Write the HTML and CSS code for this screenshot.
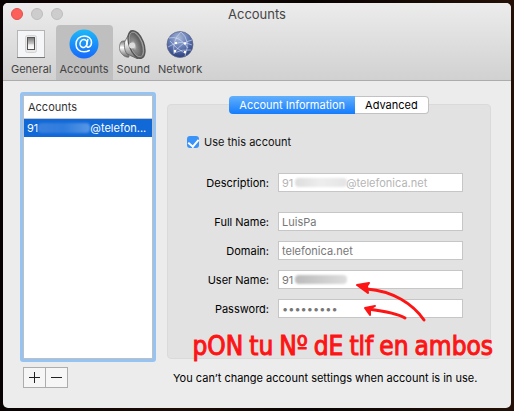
FILE: index.html
```html
<!DOCTYPE html>
<html lang="en">
<head>
<meta charset="utf-8">
<title>Accounts</title>
<link rel="stylesheet" href="styles.css">
</head>
<body>
<main class="window">
  <header class="toolbar">
    <div class="titlebar">
      <div class="lights">
        <button class="light close" aria-label="Close"></button>
        <button class="light" aria-label="Minimize"></button>
        <button class="light" aria-label="Zoom"></button>
      </div>
      <h1 class="title">Accounts</h1>
    </div>
    <nav class="tools">
      <button class="tool">
        <svg class="tool-icon" viewBox="0 0 30 30" aria-hidden="true">
          <defs><linearGradient id="sw" x2="0" y2="1"><stop offset="0" stop-color="#777"/><stop offset=".55" stop-color="#ccc"/><stop offset=".6" stop-color="#eee"/><stop offset="1" stop-color="#fff"/></linearGradient></defs>
          <rect x="1.5" y="1.5" width="27" height="27" fill="#f5f6f7" stroke="#b5b5b5"/>
          <path d="M1 28.5h28" stroke="#777"/>
          <rect x="9.500" y="6.500" width="11" height="17" rx="2" fill="#e9e9ea" stroke="#d4d4d6"/>
          <rect x="11.500" y="8.500" width="7" height="12" fill="url(#sw)" stroke="#555"/>
        </svg>
        <span>General</span>
      </button>
      <button class="tool selected">
        <svg class="tool-icon" viewBox="0 0 30 30" aria-hidden="true">
          <defs><linearGradient id="at" x2="0" y2="1"><stop offset="0" stop-color="#1db8f8"/><stop offset="1" stop-color="#1769fb"/></linearGradient></defs>
          <circle cx="15" cy="15" r="14.500" fill="url(#at)"/>
          <ellipse cx="14.500" cy="14.500" rx="3.400" ry="4" transform="rotate(20 14.500 14.500)" fill="none" stroke="#fff" stroke-width="1.500"/>
          <path d="M18.800 10.500l-1.200 6.200c-.3 2.500 4.900 1.900 4.900-3.200 0-4-3.200-6.500-7.200-6.500-4.800 0-8.300 3.500-8.300 8.200 0 4.500 3.300 7.600 8 7.600 2.200 0 3.800-.5 5.300-1.300" fill="none" stroke="#fff" stroke-width="1.500" stroke-linecap="round"/>
        </svg>
        <span>Accounts</span>
      </button>
      <button class="tool">
        <svg class="tool-icon" viewBox="0 0 30 30" aria-hidden="true">
          <defs>
            <linearGradient id="mag" x2="0" y2="1"><stop offset="0" stop-color="#777"/><stop offset=".4" stop-color="#fff"/><stop offset="1" stop-color="#666"/></linearGradient>
            <radialGradient id="cone" cx=".3" cy=".5" r=".7"><stop offset="0" stop-color="#eee"/><stop offset=".25" stop-color="#8c8c8c"/><stop offset=".7" stop-color="#5e5e5e"/><stop offset="1" stop-color="#aaa"/></radialGradient>
          </defs>
          <path d="M3 13c1-1.500 4-1 6-1l2 16c-3 1-7-2-9-6-1-3-.5-7 1-9z" fill="url(#mag)" stroke="#666" stroke-width=".7"/>
          <path d="M7 12L13 1.500 20 30 9 25c-3-4-3-9-2-13z" fill="url(#mag)" stroke="#555" stroke-width=".7"/>
          <ellipse cx="18.500" cy="15.500" rx="7.200" ry="14.500" transform="rotate(-20 18.500 15.500)" fill="url(#cone)" stroke="#555" stroke-width="1.500"/>
          <ellipse cx="18.300" cy="15.500" rx="6" ry="13" transform="rotate(-20 18.300 15.500)" fill="none" stroke="#aaa" stroke-width=".7"/>
          <circle cx="14" cy="16.500" r="3" fill="#ddd"/>
        </svg>
        <span>Sound</span>
      </button>
      <button class="tool">
        <svg class="tool-icon" viewBox="0 0 30 30" aria-hidden="true">
          <defs><radialGradient id="globe" cx=".45" cy=".25" r=".75"><stop offset="0" stop-color="#a9b9d8"/><stop offset=".5" stop-color="#667cb5"/><stop offset="1" stop-color="#2b3d7c"/></radialGradient></defs>
          <circle cx="15" cy="15.500" r="13" fill="url(#globe)" stroke="#5b6688" stroke-width=".7"/>
          <g fill="none" stroke="#dfe8f8" stroke-width=".7" opacity=".8"><path d="M4 9q10-3 19 10M3 18q12-8 24-2M16 3q-9 8-7 22M16 3q10 8 4 24M5 12q5 7 16 13M27 11q-10 2-18 13M9 24q8-4 17-3"/></g>
          <g fill="#fff"><circle cx="11" cy="14" r="1.200"/><circle cx="20" cy="14.500" r="1.200"/><circle cx="10" cy="22" r="1.200"/><circle cx="20" cy="23" r="1.200"/></g>
        </svg>
        <span>Network</span>
      </button>
    </nav>
  </header>

  <div class="content">
    <aside class="sidebar">
      <section class="list">
        <h2 class="list-head">Accounts</h2>
        <div class="list-row"><span>91</span><span class="smudge smudge-blue"></span><span>@telefon...</span></div>
      </section>
      <div class="list-actions">
        <button aria-label="Add account"><svg viewBox="0 0 11 11"><path d="M0 5.500h11M5.500 0v11"/></svg></button>
        <button aria-label="Remove account"><svg viewBox="0 0 11 11"><path d="M0 5.500h11"/></svg></button>
      </div>
    </aside>

    <section class="details">
      <div class="tabs">
        <button class="tab active">Account Information</button>
        <button class="tab">Advanced</button>
      </div>
      <form class="panel">
        <label class="use"><input type="checkbox" checked><span>Use this account</span></label>
        <div class="fields">
          <label for="desc">Description:</label>
          <div class="field faint"><input id="desc" disabled value="91&nbsp;&nbsp;&nbsp;&nbsp;&nbsp;&nbsp;&nbsp;&nbsp;&nbsp;&nbsp;&nbsp;&nbsp;&nbsp;&nbsp;&nbsp;&nbsp;&nbsp;@telefonica.net"><span class="smudge smudge-light"></span></div>
          <label for="full" class="gap">Full Name:</label>
          <div class="field gap"><input id="full" disabled value="LuisPa"></div>
          <label for="domain">Domain:</label>
          <div class="field"><input id="domain" disabled value="telefonica.net"></div>
          <label for="user">User Name:</label>
          <div class="field"><input id="user" disabled value="91"><span class="smudge smudge-gray"></span></div>
          <label for="pass">Password:</label>
          <div class="field"><input id="pass" type="password" disabled value="123456789"></div>
        </div>
        <div class="annotation">
          <svg class="arrows" viewBox="0 0 72 40" aria-hidden="true">
            <path d="M69 38C58 22 38 9 12 7"/><path d="M50 36C42 31 28 29 13 27"/>
            <path class="tip" d="M2 3l12-2-2 3 1 7z"/><path class="tip" d="M10 26l10-2-5 3 0 6z"/>
          </svg>
          <p class="note"><span>pON</span><span>tu</span><span>Nº</span><span>dE</span><span>tlf</span><span>en</span><span>ambos</span></p>
        </div>
      </form>
      <p class="hint">You can’t change account settings when account is in use.</p>
    </section>
  </div>
</main>
</body>
</html>
```
FILE: styles.css
```css
* { box-sizing: border-box; }
body {
  margin: 0;
  min-height: 100vh;
  padding: 3px;
  display: flex;
  background: linear-gradient(90deg, #080202, #1c0b04 35%, #080302 60%, #241006);
  font-family: Inter, "Liberation Sans", sans-serif;
  font-size: 11px;
  line-height: 14px;
  color: #111;
}
button, input { font: inherit; color: inherit; margin: 0; padding: 0; }
h1, h2, p { margin: 0; font-weight: 400; }

.window {
  flex: 1;
  display: flex;
  flex-direction: column;
  border-radius: 5px;
  overflow: hidden;
  background: #ececec;
}
.toolbar {
  background: linear-gradient(#ececec, #d1d1d1);
  border-bottom: 1px solid #acacac;
}
.titlebar {
  display: grid;
  grid-template-columns: 1fr auto 1fr;
  align-items: center;
  height: 22px;
  padding: 0 8px;
}
.lights { display: flex; gap: 8px; }
.light {
  width: 12px;
  height: 12px;
  border: 1px solid #bdbdbd;
  border-radius: 50%;
  background: #cdcdcd;
}
.close { background: #fc605b; border-color: #e2514c; }
.title { font-size: 13px; line-height: 22px; color: #444; }

.tools { display: flex; padding-left: 4px; }
.tool {
  display: flex;
  flex-direction: column;
  align-items: center;
  gap: 3px;
  padding: 4px;
  border: 0;
  border-radius: 4px 4px 0 0;
  background: none;
  color: #444;
}
.selected { background: #bfbfbf; }
.tool-icon { width: 30px; height: 30px; }

.content {
  flex: 1;
  display: grid;
  grid-template-columns: 136px 1fr;
  gap: 11px;
  padding: 11px 20px 20px 17px;
}
.sidebar { display: flex; flex-direction: column; gap: 5px; }
.list {
  flex: 1;
  border: 3px solid #95c3f3;
  border-radius: 3px;
  background: #fff;
  box-shadow: inset 0 0 0 1px #bfbfbf;
  padding: 1px;
}
.list-head {
  padding: 4px;
  border-bottom: 1px solid #c8c8c8;
  font-size: 11px;
  line-height: 14px;
  color: #333;
}
.list-row {
  display: flex;
  align-items: center;
  height: 18px;
  padding: 0 3px;
  background: #1169d8;
  color: #fff;
}
.list-actions { display: flex; padding-left: 3px; }
.list-actions button {
  display: grid;
  place-items: center;
  width: 23px;
  height: 21px;
  border: 1px solid #adadad;
  background: #f6f6f6;
}
.list-actions button + button { margin-left: -1px; }
.list-actions svg { width: 11px; height: 11px; stroke: #222; }

.details { display: flex; flex-direction: column; padding: 4px 0 3px; }
.tabs {
  display: flex;
  align-self: center;
  position: relative;
  z-index: 1;
  margin-bottom: -10px;
}
.tab {
  height: 18px;
  padding: 0 10px;
  border: 1px solid #c2c2c2;
  border-left: 0;
  border-radius: 0 4px 4px 0;
  background: #fff;
  color: #000;
}
.active {
  border: 0;
  border-radius: 4px 0 0 4px;
  background: linear-gradient(#62b0fb, #147cfd);
  color: #fff;
}
.panel {
  flex: 1;
  border: 1px solid #dadada;
  border-radius: 4px;
  background: #e2e2e2;
  padding: 30px 27px 0 19px;
}
.use { display: flex; align-items: center; gap: 5px; }
.use input {
  appearance: none;
  width: 12px;
  height: 12px;
  border-radius: 3px;
  background: #3b93f7;
  display: grid;
  place-items: center;
}
.use input::before {
  content: "";
  width: 5px;
  height: 8px;
  border: solid #fff;
  border-width: 0 2px 2px 0;
  transform: rotate(40deg);
}
.fields {
  display: grid;
  grid-template-columns: 82px 1fr;
  column-gap: 9px;
  row-gap: 10px;
  align-items: center;
  margin-top: 24px;
}
.fields label { text-align: right; white-space: nowrap; color: #000; }
.gap { margin-top: 10px; }
.field { position: relative; display: flex; color: #777; }
.faint { color: #b5b5b5; }
.field input {
  flex: 1;
  min-width: 0;
  height: 19px;
  padding: 0 3px;
  border: 1px solid #c6c6c6;
  background: #fff;
}
.smudge { border-radius: 4px; filter: blur(1px); }
.smudge-blue { width: 52px; height: 10px; background: linear-gradient(90deg, #3a80dd, #2f7cdd, #5897e5); }
.smudge-light, .smudge-gray { position: absolute; left: 17px; top: 5px; width: 52px; height: 9px; }
.smudge-light { background: linear-gradient(90deg, #ddd, #eee, #e4e4e4); }
.smudge-gray { background: linear-gradient(90deg, #bbb, #ccc, #ddd); }

.annotation { position: relative; height: 0; color: #fd1515; }
.arrows {
  position: absolute;
  right: 36px;
  top: -36px;
  width: 72px;
  height: 40px;
  fill: none;
  stroke: #fd1515;
  stroke-width: 3;
  stroke-linecap: round;
}
.tip { fill: #fd1515; stroke-width: 2; stroke-linejoin: round; }
.note {
  position: absolute;
  right: -30px;
  top: 12px;
  display: flex;
  gap: 6px;
  font-family: "DejaVu Sans Condensed", "DejaVu Sans", sans-serif;
  font-size: 26px;
  line-height: 32px;
  -webkit-text-stroke: 1px #fd1515;
}
.hint { padding: 12px 0 0 6px; white-space: nowrap; color: #000; }
```
